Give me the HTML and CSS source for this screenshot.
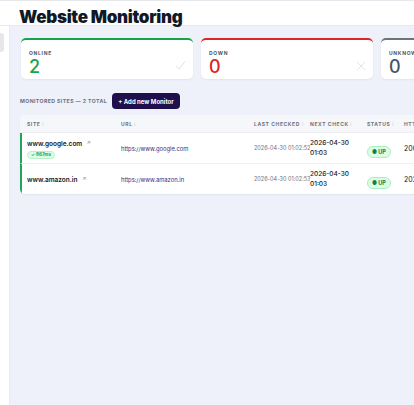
FILE: index.html
```html
<!DOCTYPE html>
<html lang="en">
<head>
    <meta charset="UTF-8">
    <meta name="viewport" content="width=device-width, initial-scale=1.0">
    <title>Website Monitoring</title>
    <link rel="stylesheet" href="styles.css">
</head>
<body>
    <header class="topbar">
        <h1>Website Monitoring</h1>
    </header>
    <div class="layout">
        <aside class="sidebar">
            <div class="side-item"></div>
        </aside>
        <main class="main">
            <div class="cards">
                <div class="card card-online">
                    <div class="card-label">ONLINE</div>
                    <div class="card-value">2</div>
                    <svg class="card-icon" viewBox="0 0 12 12" width="11" height="11"><path d="M1 6.5 L4.3 10 L11 1.5" fill="none" stroke="#d6d9df" stroke-width="0.9"/></svg>
                </div>
                <div class="card card-down">
                    <div class="card-label">DOWN</div>
                    <div class="card-value">0</div>
                    <svg class="card-icon" viewBox="0 0 12 12" width="10" height="10"><path d="M1 1 L11 11 M11 1 L1 11" fill="none" stroke="#d6d9df" stroke-width="0.9"/></svg>
                </div>
                <div class="card card-unknown">
                    <div class="card-label">UNKNOWN</div>
                    <div class="card-value">0</div>
                </div>
            </div>

            <div class="section-bar">
                <span class="section-title">MONITORED SITES — 2 TOTAL</span>
                <button class="add-button">+ Add new Monitor</button>
            </div>

            <div class="table">
                <div class="row head">
                    <div>SITE <span class="sort">⁝</span></div>
                    <div>URL <span class="sort">⁝</span></div>
                    <div>LAST CHECKED <span class="sort">⁝</span></div>
                    <div>NEXT CHECK <span class="sort">⁝</span></div>
                    <div>STATUS <span class="sort">⁝</span></div>
                    <div>HTTP <span class="sort">⁝</span></div>
                </div>
                <div class="row item">
                    <div class="site">
                        <div class="site-name">www.google.com <span class="ext">↗</span></div>
                        <span class="latency">✓ 867ms</span>
                    </div>
                    <div class="url">https://www.google.com</div>
                    <div class="last">2026-04-30 01:02:52</div>
                    <div class="next">2026-04-30<br>01:03</div>
                    <div><span class="status">● UP</span></div>
                    <div class="http">200</div>
                </div>
                <div class="row item">
                    <div class="site">
                        <div class="site-name">www.amazon.in <span class="ext">↗</span></div>
                    </div>
                    <div class="url">https://www.amazon.in</div>
                    <div class="last">2026-04-30 01:02:53</div>
                    <div class="next">2026-04-30<br>01:03</div>
                    <div><span class="status">● UP</span></div>
                    <div class="http">202</div>
                </div>
            </div>
        </main>
    </div>
</body>
</html>
```

FILE: styles.css
```css
body {
    font-family: Inter, "Liberation Sans", sans-serif;
    margin: 0;
    background-color: #eef1fa;
    color: #1f2937;
    overflow: hidden;
    height: 405px;
}
.topbar {
    height: 26px;
    background-color: #fff;
    border-top: 1px solid #e6e8ee;
    border-bottom: 1px solid #e6e9f2;
    box-sizing: border-box;
    padding-left: 19px;
}
.topbar h1 {
    margin: 0;
    padding-top: 3px;
    font-size: 17px;
    font-weight: 900;
    line-height: 26px;
    color: #111827;
    letter-spacing: -0.3px;
}
.layout {
    display: flex;
    height: 379px;
}
.sidebar {
    width: 9px;
    flex-shrink: 0;
    background-color: #fff;
    border-right: 1px solid #e8ebf3;
}
.side-item {
    width: 4px;
    height: 19px;
    margin-top: 7px;
    background-color: #e5e7eb;
    border-radius: 0 3px 3px 0;
}
.main {
    flex: 1;
    padding: 12px 0 0 10px;
    min-width: 0;
}
.cards {
    display: flex;
    gap: 8px;
    margin-left: 1px;
}
.card {
    position: relative;
    width: 172px;
    height: 41px;
    flex-shrink: 0;
    box-sizing: border-box;
    background-color: #fff;
    border-radius: 5px;
    border-top: 2px solid #16a34a;
    padding: 10px 8px 0;
    box-shadow: 0 1px 2px rgba(30, 40, 80, 0.06);
}
.card-down {
    border-top-color: #dc2626;
}
.card-unknown {
    border-top-color: #6b7280;
}
.card-label {
    font-size: 5px;
    font-weight: 700;
    letter-spacing: 0.7px;
    color: #4b5563;
    line-height: 6px;
}
.card-value {
    font-size: 18px;
    font-weight: 500;
    line-height: 18px;
    margin-top: 2px;
    color: #16a34a;
}
.card-down .card-value {
    color: #dc2626;
}
.card-unknown .card-value {
    color: #475569;
}
.card-icon {
    position: absolute;
    right: 7px;
    bottom: 8px;
}
.section-bar {
    display: flex;
    align-items: center;
    margin-top: 14px;
    height: 16px;
}
.section-title {
    font-size: 5.2px;
    font-weight: 700;
    letter-spacing: 0.4px;
    color: #6b7280;
}
.add-button {
    margin-left: 5px;
    height: 16px;
    width: 68px;
    padding: 0;
    background-color: #1f0f4d;
    color: #fff;
    border: none;
    border-radius: 4px;
    font-family: Inter, "Liberation Sans", sans-serif;
    font-size: 6px;
    font-weight: 700;
    cursor: pointer;
}
.table {
    margin-top: 6px;
    width: 520px;
    background-color: #fff;
    border-radius: 5px;
    overflow: hidden;
    box-shadow: 0 1px 2px rgba(30, 40, 80, 0.06);
}
.row {
    display: grid;
    grid-template-columns: 94px 133px 56px 57px 37px 60px;
    align-items: center;
    padding-left: 7px;
}
.head {
    height: 17px;
    background-color: #f6f7fb;
    border-bottom: 1px solid #eceef4;
    font-size: 5px;
    font-weight: 700;
    letter-spacing: 0.6px;
    color: #6b7280;
}
.sort {
    color: #c4c8d2;
}
.item {
    height: 31px;
    box-sizing: border-box;
    border-left: 2px solid #22a35a;
    padding-left: 5px;
    border-bottom: 1px solid #eef0f5;
}
.item:last-child {
    border-bottom: none;
    height: 30px;
}
.site {
    display: flex;
    flex-direction: column;
    align-items: flex-start;
    gap: 2px;
}
.site-name {
    font-size: 6.5px;
    font-weight: 600;
    line-height: 9px;
    color: #111827;
}
.ext {
    font-size: 5px;
    color: #9ca3af;
    margin-left: 3px;
    vertical-align: 2px;
}
.latency {
    font-size: 4.5px;
    font-weight: 700;
    line-height: 6px;
    color: #16a34a;
    background-color: #dcfce7;
    border: 1px solid #bbf0cd;
    border-radius: 5px;
    padding: 0 3px;
}
.url {
    font-size: 5.8px;
    color: #312e81;
    padding-top: 1px;
}
.last {
    font-size: 5.5px;
    color: #6b7280;
    white-space: nowrap;
    overflow: hidden;
    padding-right: 4px;
}
.next {
    font-size: 6.5px;
    font-weight: 500;
    color: #111827;
    line-height: 10px;
}
.status {
    display: inline-block;
    font-size: 5.5px;
    font-weight: 700;
    color: #15803d;
    background-color: #dcfce7;
    border: 1px solid #a7efc1;
    border-radius: 7px;
    padding: 2px 4px;
}
.http {
    font-size: 7px;
    color: #111827;
}
```
